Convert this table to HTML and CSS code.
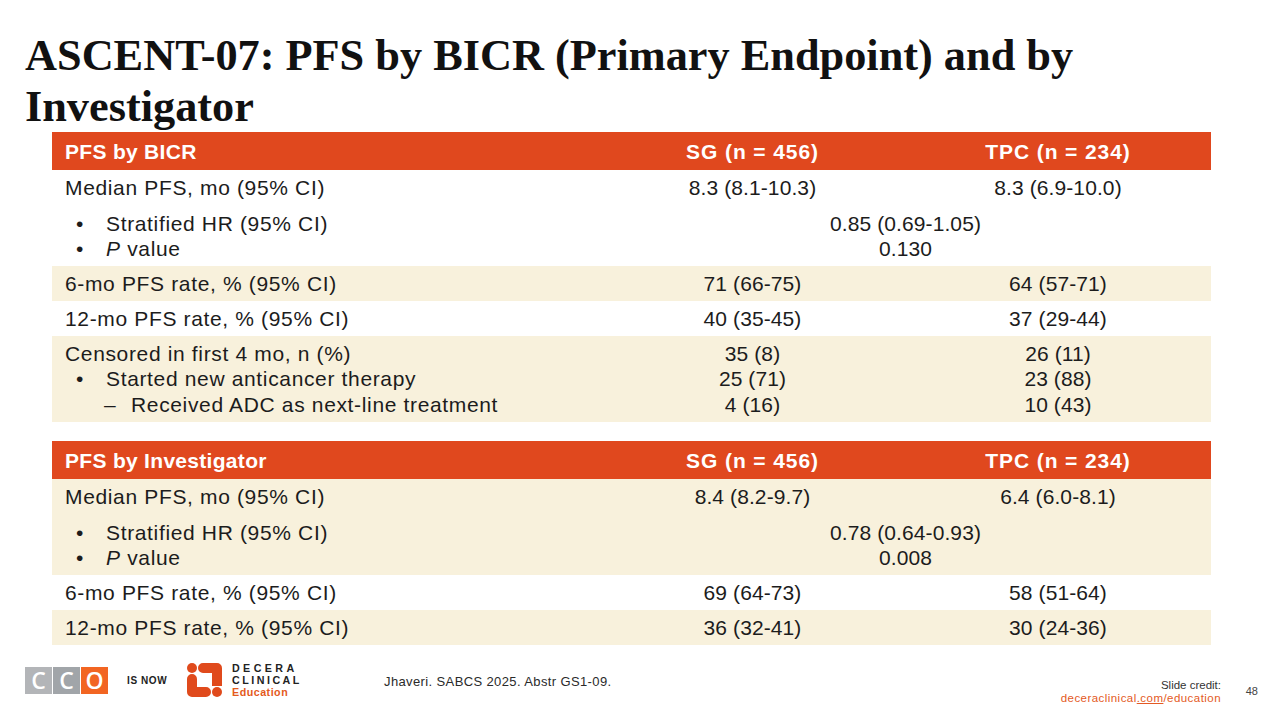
FILE: index.html
```html
<!DOCTYPE html>
<html lang="en">
<head>
<meta charset="utf-8">
<title>ASCENT-07 PFS</title>
<link rel="stylesheet" href="styles.css">
</head>
<body>
<div class="slide">
  <h1 class="title">ASCENT-07: PFS by BICR (Primary Endpoint) and by Investigator</h1>

  <div class="table">
    <div class="row head">
      <div class="lab">PFS by BICR</div>
      <div class="val">SG (n = 456)</div>
      <div class="val">TPC (n = 234)</div>
    </div>
    <div class="row r35">
      <div class="lab">Median PFS, mo (95% CI)</div>
      <div class="val">8.3 (8.1-10.3)</div>
      <div class="val">8.3 (6.9-10.0)</div>
    </div>
    <div class="row r61">
      <div class="lab">
        <div class="sub"><span class="blt">•</span>Stratified HR (95% CI)</div>
        <div class="sub"><span class="blt">•</span><i>P</i>&nbsp;value</div>
      </div>
      <div class="val span2">0.85 (0.69-1.05)<br>0.130</div>
    </div>
    <div class="row r35 beige">
      <div class="lab">6-mo PFS rate, % (95% CI)</div>
      <div class="val">71 (66-75)</div>
      <div class="val">64 (57-71)</div>
    </div>
    <div class="row r35">
      <div class="lab">12-mo PFS rate, % (95% CI)</div>
      <div class="val">40 (35-45)</div>
      <div class="val">37 (29-44)</div>
    </div>
    <div class="row r86 beige">
      <div class="lab">
        <div>Censored in first 4 mo, n (%)</div>
        <div class="sub"><span class="blt">•</span>Started new anticancer therapy</div>
        <div class="sub2"><span class="dsh">–</span>Received ADC as next-line treatment</div>
      </div>
      <div class="val">35 (8)<br>25 (71)<br>4 (16)</div>
      <div class="val">26 (11)<br>23 (88)<br>10 (43)</div>
    </div>

    <div class="gap"></div>

    <div class="row head">
      <div class="lab">PFS by Investigator</div>
      <div class="val">SG (n = 456)</div>
      <div class="val">TPC (n = 234)</div>
    </div>
    <div class="row r35 beige">
      <div class="lab">Median PFS, mo (95% CI)</div>
      <div class="val">8.4 (8.2-9.7)</div>
      <div class="val">6.4 (6.0-8.1)</div>
    </div>
    <div class="row r61 beige">
      <div class="lab">
        <div class="sub"><span class="blt">•</span>Stratified HR (95% CI)</div>
        <div class="sub"><span class="blt">•</span><i>P</i>&nbsp;value</div>
      </div>
      <div class="val span2">0.78 (0.64-0.93)<br>0.008</div>
    </div>
    <div class="row r35">
      <div class="lab">6-mo PFS rate, % (95% CI)</div>
      <div class="val">69 (64-73)</div>
      <div class="val">58 (51-64)</div>
    </div>
    <div class="row r35 beige">
      <div class="lab">12-mo PFS rate, % (95% CI)</div>
      <div class="val">36 (32-41)</div>
      <div class="val">30 (24-36)</div>
    </div>
  </div>

  <footer class="footer">
    <div class="logos">
      <div class="cco">
        <span class="cbox g1">C</span><span class="cbox g2">C</span><span class="cbox or">O</span>
      </div>
      <span class="isnow">IS NOW</span>
      <svg class="decera-icon" width="35" height="34" viewBox="0 0 35 34">
        <circle cx="5" cy="5" r="5" fill="#e04a1c"/>
        <path d="M16 0 H30 A5 5 0 0 1 35 5 V23 H25 V10 H16 A5 5 0 0 1 16 0 Z" fill="#e04a1c"/>
        <path d="M0 16 A5 5 0 0 1 10 16 V24 H19 A5 5 0 0 1 19 34 H5 A5 5 0 0 1 0 29 Z" fill="#e04a1c"/>
        <circle cx="30" cy="29" r="5" fill="#e04a1c"/>
      </svg>
      <div class="decera-text">
        <div class="dt1">DECERA</div>
        <div class="dt2">CLINICAL</div>
        <div class="dt3">Education</div>
      </div>
      <div class="cite">Jhaveri. SABCS 2025. Abstr GS1-09.</div>
    </div>
    <div class="credit">
      <div>Slide credit:</div>
      <div class="link">deceraclinical<u>.com</u>/education</div>
    </div>
    <div class="pnum">48</div>
  </footer>
</div>
</body>
</html>
```

FILE: styles.css
```css
html, body {
  margin: 0;
  padding: 0;
  background: #ffffff;
}

.slide {
  width: 1280px;
  height: 720px;
  overflow: hidden;
  display: flex;
  flex-direction: column;
  font-family: "Liberation Sans", Arial, sans-serif;
  color: #1c1c1c;
}

.title {
  margin: 30px 0 0 0;
  padding-left: 25px;
  height: 102px;
  font-family: "Liberation Serif", "DejaVu Serif", serif;
  font-weight: bold;
  font-size: 44.3px;
  line-height: 51px;
  color: #111111;
  width: 1100px;
}

.table {
  margin-left: 52px;
  width: 1159px;
  display: flex;
  flex-direction: column;
}

.row {
  display: grid;
  grid-template-columns: 548px 305px 306px;
  align-items: center;
  font-size: 21px;
  line-height: 25px;
  background: #ffffff;
}

.row.beige {
  background: #f8f1dc;
}

.row.head {
  height: 38px;
  background: #e0481e;
  color: #ffffff;
  font-weight: bold;
}

.r35 { height: 35px; }
.r61 { height: 61px; }
.r86 { height: 86px; line-height: 25.5px; }

.lab {
  padding-left: 13px;
  white-space: nowrap;
  letter-spacing: 0.65px;
}

.head .lab {
  letter-spacing: 0.3px;
}

.val {
  text-align: center;
  white-space: nowrap;
  letter-spacing: 0.1px;
}

.head .val {
  letter-spacing: 0.9px;
}

.span2 {
  grid-column: 2 / 4;
}

.sub {
  display: flex;
  margin-left: 11px;
}

.blt {
  width: 30px;
  flex: none;
}

.sub2 {
  display: flex;
  margin-left: 39px;
}

.dsh {
  width: 27px;
  flex: none;
}

.gap {
  height: 19px;
}

.footer {
  margin-top: 14px;
  height: 46px;
  display: flex;
  align-items: flex-start;
  padding-left: 25px;
}

.logos {
  height: 42px;
  display: flex;
  align-items: center;
}

.cco {
  display: flex;
  gap: 1px;
  height: 27px;
}

.cbox {
  width: 27px;
  height: 27px;
  display: flex;
  align-items: center;
  justify-content: center;
  color: #ffffff;
  font-family: "Open Sans", sans-serif;
  font-weight: 600;
  font-size: 23px;
  line-height: 27px;
}

.g1 { background: #b3b5b8; }
.g2 { background: #a1a5a9; }
.or { background: #f26522; }

.isnow {
  margin-left: 19px;
  width: 44px;
  font-family: "Liberation Sans", sans-serif;
  font-weight: bold;
  font-size: 10px;
  letter-spacing: 0.6px;
  color: #222222;
  white-space: nowrap;
}

.decera-icon {
  margin-left: 16px;
  display: block;
  flex: none;
}

.decera-text {
  margin-left: 10px;
  width: 76px;
  font-family: "Liberation Sans", sans-serif;
  font-weight: bold;
  font-size: 10.7px;
  line-height: 12px;
  color: #222222;
  white-space: nowrap;
}

.dt1 { letter-spacing: 3.4px; }
.dt2 { letter-spacing: 2.5px; }
.dt3 { color: #e45a1c; letter-spacing: 0.5px; }

.cite {
  margin-left: 76px;
  margin-top: 2px;
  font-size: 13px;
  letter-spacing: 0.38px;
  color: #2a2a2a;
  white-space: nowrap;
}

.credit {
  margin-left: auto;
  padding-top: 20px;
  font-size: 11.5px;
  line-height: 13px;
  text-align: right;
  color: #333333;
}

.credit .link {
  color: #e45a24;
  letter-spacing: 0.45px;
}

.credit u {
  text-decoration-thickness: 1px;
}

.pnum {
  width: 37px;
  margin-right: 22px;
  padding-top: 26px;
  text-align: right;
  font-size: 11px;
  line-height: 13px;
  color: #444444;
}
```
